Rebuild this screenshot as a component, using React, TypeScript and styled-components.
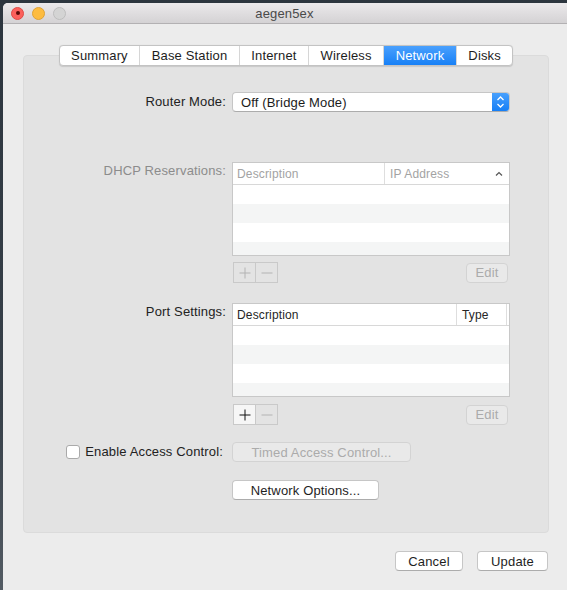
import styled, { createGlobalStyle } from "styled-components";

const GlobalStyle = createGlobalStyle`
  html, body {
    margin: 0;
    padding: 0;
  }
  body {
    width: 567px;
    height: 590px;
    overflow: hidden;
    background: linear-gradient(180deg, #2c353e 0%, #38414a 70%, #535b63 100%);
    font-family: "Liberation Sans", Arial, sans-serif;
    font-size: 13px;
    letter-spacing: 0.15px;
    color: #262626;
  }
`;

const tabs = ["Summary", "Base Station", "Internet", "Wireless", "Network", "Disks"];

const Desktop = styled.div`
  padding: 3px 0 0 3px;
`;

const Window = styled.div`
  width: 575px;
  height: 600px;
  background: #ececec;
  border-radius: 5px 5px 0 0;
  overflow: hidden;
  display: flex;
  flex-direction: column;
`;

const TitleBar = styled.div`
  height: 20px;
  border-bottom: 1px solid #b3b1b3;
  background: linear-gradient(180deg, #ebe9eb 0%, #d4d2d4 100%);
  display: grid;
  grid-template-columns: 1fr auto 1fr;
  align-items: center;
  padding-right: 12px;
`;

const Lights = styled.div`
  display: flex;
  gap: 8px;
  padding-left: 8px;
`;

const Light = styled.span<{ $fill: string; $edge: string }>`
  width: 11px;
  height: 11px;
  border-radius: 50%;
  background: ${({ $fill }) => $fill};
  border: 0.5px solid ${({ $edge }) => $edge};
  display: flex;
  align-items: center;
  justify-content: center;
`;

const CloseDot = styled.span`
  width: 4px;
  height: 4px;
  border-radius: 50%;
  background: #5a0a08;
`;

const Title = styled.div`
  color: #4a4a4a;
  font-size: 13px;
`;

const Panel = styled.div`
  width: 526px;
  margin: 21px 0 0 20px;
  display: flex;
  flex-direction: column;
`;

const TabBar = styled.div`
  align-self: center;
  position: relative;
  z-index: 1;
  display: flex;
  height: 19px;
  background: #fff;
  border: 1px solid #c3c3c3;
  border-radius: 4px;
  overflow: hidden;
  box-shadow: 0 0.5px 1px rgba(0, 0, 0, 0.12);
`;

const Tab = styled.div<{ $active: boolean }>`
  padding: 0 11.5px;
  line-height: 19px;
  color: ${({ $active }) => ($active ? "#fff" : "#1d1d1d")};
  background: ${({ $active }) => ($active ? "linear-gradient(180deg, #4aa0fd 0%, #1780f6 100%)" : "transparent")};
  & + & {
    border-left: 1px solid #d6d6d6;
  }
`;

const GroupBox = styled.div`
  margin-top: -11px;
  padding: 36px 38px 32px 0;
  background: #e3e3e3;
  border: 1px solid #dbdbdb;
  border-radius: 4px;
`;

const FormRow = styled.div<{ $top: number }>`
  display: grid;
  grid-template-columns: 202px 278px;
  column-gap: 6px;
  align-items: start;
  margin-top: ${({ $top }) => $top}px;
`;

const Label = styled.div<{ $muted?: boolean; $pad?: number }>`
  text-align: right;
  line-height: 16px;
  padding-top: ${({ $pad }) => $pad ?? 0}px;
  color: ${({ $muted }) => ($muted ? "#8c8c8c" : "#222")};
`;

const PopUp = styled.div`
  box-sizing: border-box;
  height: 20px;
  display: flex;
  align-items: center;
  background: #fff;
  border: 1px solid #c6c6c6;
  border-bottom-color: #acacac;
  border-radius: 4px;
  overflow: hidden;
`;

const PopUpText = styled.span`
  flex: 1;
  padding-left: 8px;
  color: #1b1b1b;
`;

const Stepper = styled.span`
  width: 17px;
  height: 100%;
  display: flex;
  align-items: center;
  justify-content: center;
  background: linear-gradient(180deg, #48a0fd 0%, #167ff6 100%);
`;

const Table = styled.div`
  box-sizing: border-box;
  height: 94px;
  background: #fff;
  border: 1px solid #c8c8c8;
  display: flex;
  flex-direction: column;
  overflow: hidden;
`;

const HeaderRow = styled.div<{ $muted?: boolean }>`
  display: flex;
  align-items: center;
  height: 21px;
  flex-shrink: 0;
  border-bottom: 1px solid #d8d8d8;
  font-size: 12px;
  color: ${({ $muted }) => ($muted ? "#a3a3a3" : "#262626")};
`;

const HeaderCell = styled.div<{ $width?: number }>`
  box-sizing: border-box;
  height: 100%;
  display: flex;
  align-items: center;
  justify-content: space-between;
  padding: 0 6px 0 4px;
  width: ${({ $width }) => ($width ? `${$width}px` : "auto")};
  flex: ${({ $width }) => ($width ? "none" : 1)};
  & + & {
    border-left: 1px solid #dedede;
    padding-left: 5px;
  }
`;

const Rows = styled.div`
  flex: 1;
  overflow: hidden;
`;

const Row = styled.div`
  height: 19px;
  &:nth-child(even) {
    background: #f4f5f5;
  }
`;

const ButtonLine = styled.div`
  display: flex;
  justify-content: space-between;
  align-items: center;
  padding: 0 2px 0 1px;
`;

const Segmented = styled.div`
  box-sizing: border-box;
  display: flex;
  height: 21px;
  border: 1px solid #c9c9c9;
`;

const SegCell = styled.span<{ $enabled?: boolean }>`
  width: 21px;
  height: 100%;
  display: flex;
  align-items: center;
  justify-content: center;
  background: ${({ $enabled }) => ($enabled ? "#f6f6f6" : "transparent")};
  color: ${({ $enabled }) => ($enabled ? "#111" : "#b3b3b3")};
  & + & {
    border-left: 1px solid #c9c9c9;
  }
`;

const PushButton = styled.div<{ $width: number; $disabled?: boolean }>`
  box-sizing: border-box;
  width: ${({ $width }) => $width}px;
  height: 20px;
  display: flex;
  align-items: center;
  justify-content: center;
  border-radius: 4px;
  border: 1px solid ${({ $disabled }) => ($disabled ? "#d3d3d3" : "#c6c6c6")};
  border-bottom-color: ${({ $disabled }) => ($disabled ? "#d3d3d3" : "#acacac")};
  background: ${({ $disabled }) => ($disabled ? "#e9e9e9" : "#fff")};
  color: ${({ $disabled }) => ($disabled ? "#ababab" : "#1e1e1e")};
`;

const CheckLabel = styled.label`
  display: flex;
  justify-content: flex-end;
  align-items: center;
  gap: 5px;
  height: 19px;
  padding-right: 3px;
  color: #222;
`;

const CheckBox = styled.span`
  box-sizing: border-box;
  width: 14px;
  height: 14px;
  background: #fff;
  border: 1px solid #aaaaaa;
  border-radius: 3px;
`;

const Footer = styled.div`
  display: flex;
  justify-content: flex-end;
  gap: 14px;
  margin-top: 18px;
  padding-right: 1px;
`;

const Plus = () => (
  <svg width="12" height="12" viewBox="0 0 12 12">
    <path d="M6 0.5V11.5M0.5 6H11.5" stroke="currentColor" strokeWidth="1" fill="none" />
  </svg>
);

const Minus = () => (
  <svg width="12" height="12" viewBox="0 0 12 12">
    <path d="M0.5 6H11.5" stroke="currentColor" strokeWidth="1" fill="none" />
  </svg>
);

const Updown = () => (
  <svg width="9" height="14" viewBox="0 0 9 14">
    <path d="M1.5 5L4.5 2L7.5 5M1.5 9L4.5 12L7.5 9" stroke="#fff" strokeWidth="1.3" fill="none" />
  </svg>
);

const Caret = () => (
  <svg width="8" height="6" viewBox="0 0 8 6">
    <path d="M1 4.5L4 1.5L7 4.5" stroke="#555" strokeWidth="1.2" fill="none" />
  </svg>
);

const EmptyRows = () => (
  <Rows>
    <Row />
    <Row />
    <Row />
    <Row />
  </Rows>
);

export default function App() {
  return (
    <Desktop>
      <GlobalStyle />
      <Window>
        <TitleBar>
          <Lights>
            <Light $fill="#fc605c" $edge="#de4a46">
              <CloseDot />
            </Light>
            <Light $fill="#fdbc40" $edge="#dea236" />
            <Light $fill="#d4d4d4" $edge="#bdbdbd" />
          </Lights>
          <Title>aegen5ex</Title>
          <span />
        </TitleBar>

        <Panel>
          <TabBar>
            {tabs.map((t) => (
              <Tab key={t} $active={t === "Network"}>
                {t}
              </Tab>
            ))}
          </TabBar>

          <GroupBox>
            <FormRow $top={0}>
              <Label $pad={2}>Router Mode:</Label>
              <PopUp>
                <PopUpText>Off (Bridge Mode)</PopUpText>
                <Stepper>
                  <Updown />
                </Stepper>
              </PopUp>
            </FormRow>

            <FormRow $top={50}>
              <Label $muted $pad={1}>DHCP Reservations:</Label>
              <Table>
                <HeaderRow $muted>
                  <HeaderCell $width={151}>Description</HeaderCell>
                  <HeaderCell>
                    IP Address
                    <Caret />
                  </HeaderCell>
                </HeaderRow>
                <EmptyRows />
              </Table>
            </FormRow>

            <FormRow $top={6}>
              <span />
              <ButtonLine>
                <Segmented>
                  <SegCell>
                    <Plus />
                  </SegCell>
                  <SegCell>
                    <Minus />
                  </SegCell>
                </Segmented>
                <PushButton $width={42} $disabled>
                  Edit
                </PushButton>
              </ButtonLine>
            </FormRow>

            <FormRow $top={20}>
              <Label $pad={1}>Port Settings:</Label>
              <Table>
                <HeaderRow>
                  <HeaderCell $width={223}>Description</HeaderCell>
                  <HeaderCell $width={50}>Type</HeaderCell>
                  <HeaderCell />
                </HeaderRow>
                <EmptyRows />
              </Table>
            </FormRow>

            <FormRow $top={7}>
              <span />
              <ButtonLine>
                <Segmented>
                  <SegCell $enabled>
                    <Plus />
                  </SegCell>
                  <SegCell>
                    <Minus />
                  </SegCell>
                </Segmented>
                <PushButton $width={42} $disabled>
                  Edit
                </PushButton>
              </ButtonLine>
            </FormRow>

            <FormRow $top={17}>
              <CheckLabel>
                <CheckBox />
                Enable Access Control:
              </CheckLabel>
              <PushButton $width={179} $disabled>
                Timed Access Control...
              </PushButton>
            </FormRow>

            <FormRow $top={18}>
              <span />
              <PushButton $width={147}>Network Options...</PushButton>
            </FormRow>
          </GroupBox>

          <Footer>
            <PushButton $width={68}>Cancel</PushButton>
            <PushButton $width={71}>Update</PushButton>
          </Footer>
        </Panel>
      </Window>
    </Desktop>
  );
}
